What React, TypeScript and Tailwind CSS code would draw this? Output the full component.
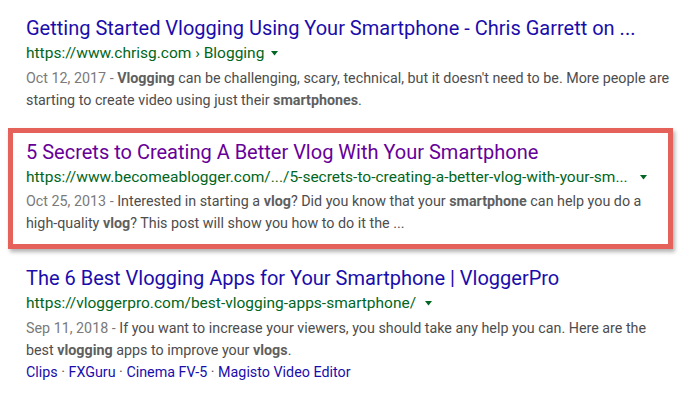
import React from "react";

const Arrow = ({ ml = "ml-[8px]" }: { ml?: string }) => (
  <svg width="7" height="5" viewBox="0 0 7 5" className={`${ml} inline-block`}>
    <path d="M0 0 L7 0 L3.5 4.5 Z" fill="#006621" />
  </svg>
);

const B = ({ children }: { children: React.ReactNode }) => (
  <b className="font-bold text-[#5f5f5f]">{children}</b>
);

export default function App() {
  return (
    <div
      className="w-[697px] h-[401px] bg-white overflow-hidden"
      style={{ fontFamily: "Roboto, 'Liberation Sans', sans-serif" }}
    >
      <div className="pt-[14px] pl-[26px] pr-[18px]">
        <div className="text-[20px] leading-[28px] text-[#1a0dab] whitespace-nowrap">
          Getting Started Vlogging Using Your Smartphone - Chris Garrett on ...
        </div>
        <div className="flex items-center text-[15.5px] leading-[22px] text-[#006621]">
          https://www.chrisg.com › Blogging
          <Arrow ml="ml-[7px]" />
        </div>
        <div className="mt-[3px] text-[14.3px] leading-[22px] text-[#4d4d4d]">
          <span className="text-[#7a7a7a]">Oct 12, 2017 - </span>
          <B>Vlogging</B> can be challenging, scary, technical, but it doesn't need to be. More people are starting to create video using just their{" "}
          <B>smartphones</B>.
        </div>
      </div>

      <div className="mt-[17px] ml-[8px] mr-[24px] border-[5px] border-[#e4625a] shadow-[2px_3px_4px_rgba(0,0,0,0.3)] pl-[13px] pr-[8px] pt-[5px] pb-[10px]">
        <div className="text-[20px] leading-[28px] text-[#660099] whitespace-nowrap">
          5 Secrets to Creating A Better Vlog With Your Smartphone
        </div>
        <div className="flex items-center text-[15.5px] leading-[22px] text-[#006621] whitespace-nowrap">
          https://www.becomeablogger.com/.../5-secrets-to-creating-a-better-vlog-with-your-sm...
          <Arrow ml="ml-[12px]" />
        </div>
        <div className="mt-[2px] text-[14.3px] leading-[22px] text-[#4d4d4d]">
          <span className="text-[#7a7a7a]">Oct 25, 2013 - </span>
          Interested in starting a <B>vlog</B>? Did you know that your <B>smartphone</B> can help you do a high-quality{" "}
          <B>vlog</B>? This post will show you how to do it the ...
        </div>
      </div>

      <div className="pt-[15px] pl-[26px] pr-[30px]">
        <div className="text-[20px] leading-[28px] text-[#1a0dab] whitespace-nowrap">
          The 6 Best Vlogging Apps for Your Smartphone | VloggerPro
        </div>
        <div className="flex items-center text-[15.5px] leading-[22px] text-[#006621]">
          https://vloggerpro.com/best-vlogging-apps-smartphone/
          <Arrow ml="ml-[9px]" />
        </div>
        <div className="mt-[3px] text-[14.3px] leading-[22px] text-[#4d4d4d]">
          <span className="text-[#7a7a7a]">Sep 11, 2018 - </span>
          If you want to increase your viewers, you should take any help you can. Here are the best{" "}
          <B>vlogging</B> apps to improve your <B>vlogs</B>.
        </div>
        <div className="text-[14.3px] leading-[22px] text-[#1a0dab]">
          Clips <span className="text-[#545454]">·</span> FXGuru <span className="text-[#545454]">·</span> Cinema FV-5{" "}
          <span className="text-[#545454]">·</span> Magisto Video Editor
        </div>
      </div>
    </div>
  );
}
